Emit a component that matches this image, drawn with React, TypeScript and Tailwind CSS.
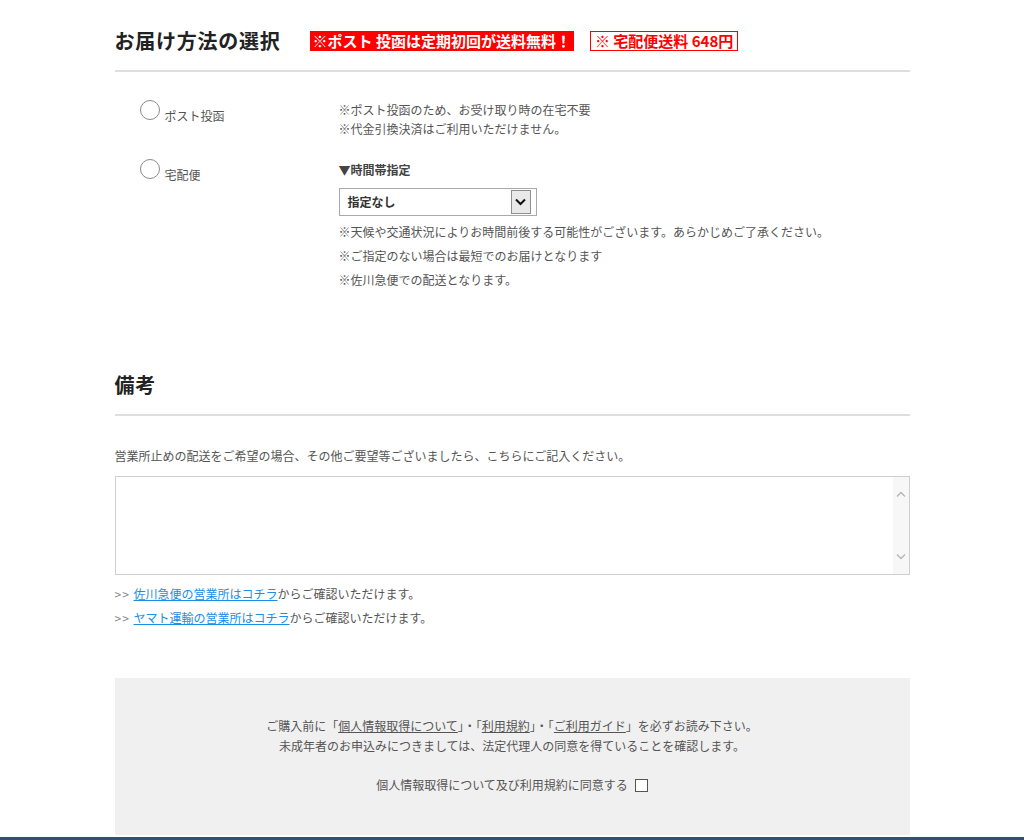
const font = { fontFamily: '"Noto Sans CJK JP", "Noto Sans", sans-serif' };

function Radio() {
  return <span className="block w-[20px] h-[20px] rounded-full border border-[#8a8a8a] bg-white shrink-0" />;
}

function SectionTitle({ children, extra }: { children: React.ReactNode; extra?: React.ReactNode }) {
  return (
    <div className="flex items-center pb-[15px] border-b-2 border-[#dedede]">
      <h2 className="text-[20px] leading-[28px] font-bold text-[#222] tracking-[0.75px]">{children}</h2>
      {extra}
    </div>
  );
}

export default function App() {
  return (
    <div className="min-h-[840px] bg-white text-[12px] text-[#555]" style={font}>
      <div className="w-[795px] mx-auto pt-[27px]">
        {/* お届け方法 */}
        <SectionTitle
          extra={
            <>
              <span className="ml-[29px] bg-[#ff0000] text-white font-bold text-[15px] leading-[20px] px-[3px]">
                ※ポスト 投函は定期初回が送料無料！
              </span>
              <span className="ml-[16px] border border-[#ff0000] text-[#ff0000] font-bold text-[15px] leading-[18px] px-[4px]">
                ※ 宅配便送料 648円
              </span>
            </>
          }
        >
          お届け方法の選択
        </SectionTitle>

        <div className="flex pt-[28px]">
          <div className="w-[224px] pl-[25px] flex items-start gap-[5px]">
            <Radio />
            <span className="mt-[6px] leading-[19px]">ポスト投函</span>
          </div>
          <div className="flex-1 leading-[19px]">
            <p>※ポスト投函のため、お受け取り時の在宅不要</p>
            <p>※代金引換決済はご利用いただけません。</p>
          </div>
        </div>

        <div className="flex pt-[21px]">
          <div className="w-[224px] pl-[25px] flex items-start gap-[5px]">
            <Radio />
            <span className="mt-[6px] leading-[19px]">宅配便</span>
          </div>
          <div className="flex-1">
            <p className="mt-[1px] leading-[19px] font-bold text-[#444]">▼時間帯指定</p>
            <div className="mt-[9px] w-[198px] h-[28px] border border-[#a9a9a9] flex items-center justify-between pl-[8px] pr-[5px]">
              <span className="font-bold text-[#333]">指定なし</span>
              <span className="w-[20px] h-[24px] border border-[#8f8f8f] bg-[#e9e9e9] flex items-center justify-center">
                <svg width="11" height="8" viewBox="0 0 11 8">
                  <path d="M1 1.5 L5.5 6 L10 1.5" fill="none" stroke="#111" strokeWidth="2" />
                </svg>
              </span>
            </div>
            <div className="mt-[4px] leading-[24px]">
              <p>※天候や交通状況によりお時間前後する可能性がございます。あらかじめご了承ください。</p>
              <p>※ご指定のない場合は最短でのお届けとなります</p>
              <p>※佐川急便での配送となります。</p>
            </div>
          </div>
        </div>

        {/* 備考 */}
        <div className="mt-[79px]">
          <SectionTitle>備考</SectionTitle>
        </div>
        <p className="mt-[30px] leading-[19px]">
          営業所止めの配送をご希望の場合、その他ご要望等ございましたら、こちらにご記入ください。
        </p>
        <div className="mt-[11px] h-[99px] border border-[#cfcfcf] flex">
          <textarea className="flex-1 resize-none outline-none p-[4px] text-[12px]" />
          <div className="w-[16px] bg-[#f7f7f7] flex flex-col items-center justify-between py-[14px]">
            <svg width="10" height="6" viewBox="0 0 10 6">
              <path d="M1 5.5 L5 1.5 L9 5.5" fill="none" stroke="#b5b5b5" strokeWidth="1.3" />
            </svg>
            <svg width="10" height="6" viewBox="0 0 10 6">
              <path d="M1 0.5 L5 4.5 L9 0.5" fill="none" stroke="#b5b5b5" strokeWidth="1.3" />
            </svg>
          </div>
        </div>
        <div className="mt-[7px] leading-[24px]">
          <p>
            <span className="text-[#888] tracking-[1px]">&gt;&gt; </span>
            <a href="#" className="text-[#1b8ee6] underline">佐川急便の営業所はコチラ</a>からご確認いただけます。
          </p>
          <p>
            <span className="text-[#888] tracking-[1px]">&gt;&gt; </span>
            <a href="#" className="text-[#1b8ee6] underline">ヤマト運輸の営業所はコチラ</a>からご確認いただけます。
          </p>
        </div>

        {/* 同意 */}
        <div className="mt-[48px] bg-[#f0f0f0] pt-[38px] pb-[40px] text-center">
          <p className="leading-[20px]">
            ご購入前に「<a href="#" className="underline">個人情報取得について</a>」・「
            <a href="#" className="underline">利用規約</a>」・「<a href="#" className="underline">ご利用ガイド</a>」を必ずお読み下さい。
          </p>
          <p className="leading-[20px]">未成年者のお申込みにつきましては、法定代理人の同意を得ていることを確認します。</p>
          <p className="mt-[19px] leading-[20px] flex items-center justify-center gap-[7px]">
            個人情報取得について及び利用規約に同意する
            <span className="inline-block w-[13px] h-[13px] border border-[#555] bg-white" />
          </p>
        </div>
      </div>
      <div className="mt-[2px] h-[40px] bg-[#34506c]" />
    </div>
  );
}
